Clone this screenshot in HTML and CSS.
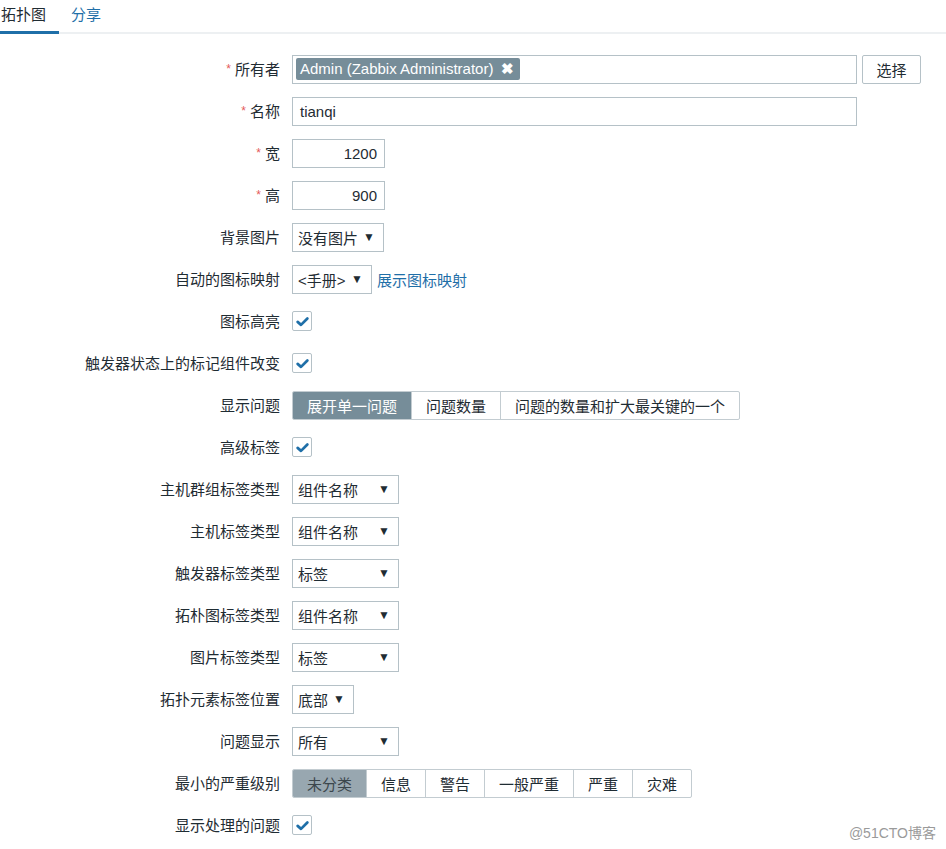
FILE: index.html
```html
<!DOCTYPE html>
<html lang="zh">
<head>
<meta charset="utf-8">
<link rel="stylesheet" href="styles.css">
</head>
<body>
<div class="tabs">
  <div class="tab active">拓扑图</div>
  <div class="tab link">分享</div>
</div>
<div class="form">
  <div class="row">
    <div class="label"><span class="req">*</span>所有者</div>
    <div class="field">
      <div class="multi"><span class="tag">Admin (Zabbix Administrator) <b class="x">✖</b></span></div>
      <button class="btn">选择</button>
    </div>
  </div>
  <div class="row">
    <div class="label"><span class="req">*</span>名称</div>
    <div class="field"><div class="input wide"><span class="latin">tianqi</span></div></div>
  </div>
  <div class="row">
    <div class="label"><span class="req">*</span>宽</div>
    <div class="field"><div class="input num"><span class="latin">1200</span></div></div>
  </div>
  <div class="row">
    <div class="label"><span class="req">*</span>高</div>
    <div class="field"><div class="input num"><span class="latin">900</span></div></div>
  </div>
  <div class="row">
    <div class="label">背景图片</div>
    <div class="field"><div class="select w92"><span>没有图片</span><i class="arr">▼</i></div></div>
  </div>
  <div class="row">
    <div class="label">自动的图标映射</div>
    <div class="field"><div class="select w80"><span>&lt;手册&gt;</span><i class="arr">▼</i></div><a class="lnk">展示图标映射</a></div>
  </div>
  <div class="row">
    <div class="label">图标高亮</div>
    <div class="field"><span class="cb"><svg viewBox="0 0 20 20" width="15" height="15"><path d="M3.5 10.5 L8 14.5 L16.5 6" fill="none" stroke="#1f6fa8" stroke-width="3.6" stroke-linecap="round" stroke-linejoin="round"/></svg></span></div>
  </div>
  <div class="row">
    <div class="label">触发器状态上的标记组件改变</div>
    <div class="field"><span class="cb"><svg viewBox="0 0 20 20" width="15" height="15"><path d="M3.5 10.5 L8 14.5 L16.5 6" fill="none" stroke="#1f6fa8" stroke-width="3.6" stroke-linecap="round" stroke-linejoin="round"/></svg></span></div>
  </div>
  <div class="row">
    <div class="label">显示问题</div>
    <div class="field">
      <div class="seg">
        <span class="opt on">展开单一问题</span><span class="opt">问题数量</span><span class="opt">问题的数量和扩大最关键的一个</span>
      </div>
    </div>
  </div>
  <div class="row">
    <div class="label">高级标签</div>
    <div class="field"><span class="cb"><svg viewBox="0 0 20 20" width="15" height="15"><path d="M3.5 10.5 L8 14.5 L16.5 6" fill="none" stroke="#1f6fa8" stroke-width="3.6" stroke-linecap="round" stroke-linejoin="round"/></svg></span></div>
  </div>
  <div class="row">
    <div class="label">主机群组标签类型</div>
    <div class="field"><div class="select w107"><span>组件名称</span><i class="arr">▼</i></div></div>
  </div>
  <div class="row">
    <div class="label">主机标签类型</div>
    <div class="field"><div class="select w107"><span>组件名称</span><i class="arr">▼</i></div></div>
  </div>
  <div class="row">
    <div class="label">触发器标签类型</div>
    <div class="field"><div class="select w107"><span>标签</span><i class="arr">▼</i></div></div>
  </div>
  <div class="row">
    <div class="label">拓朴图标签类型</div>
    <div class="field"><div class="select w107"><span>组件名称</span><i class="arr">▼</i></div></div>
  </div>
  <div class="row">
    <div class="label">图片标签类型</div>
    <div class="field"><div class="select w107"><span>标签</span><i class="arr">▼</i></div></div>
  </div>
  <div class="row">
    <div class="label">拓扑元素标签位置</div>
    <div class="field"><div class="select w62"><span>底部</span><i class="arr">▼</i></div></div>
  </div>
  <div class="row">
    <div class="label">问题显示</div>
    <div class="field"><div class="select w107"><span>所有</span><i class="arr">▼</i></div></div>
  </div>
  <div class="row">
    <div class="label">最小的严重级别</div>
    <div class="field">
      <div class="seg">
        <span class="opt sev-on">未分类</span><span class="opt">信息</span><span class="opt">警告</span><span class="opt">一般严重</span><span class="opt">严重</span><span class="opt">灾难</span>
      </div>
    </div>
  </div>
  <div class="row">
    <div class="label">显示处理的问题</div>
    <div class="field"><span class="cb"><svg viewBox="0 0 20 20" width="15" height="15"><path d="M3.5 10.5 L8 14.5 L16.5 6" fill="none" stroke="#1f6fa8" stroke-width="3.6" stroke-linecap="round" stroke-linejoin="round"/></svg></span></div>
  </div>
</div>
<div class="watermark">@51CTO博客</div>
</body>
</html>
```
FILE: styles.css
```css
html, body {
  margin: 0;
  padding: 0;
  background: #fff;
}
body {
  font-family: "Liberation Sans", "Noto Sans CJK SC", sans-serif;
  font-size: 15px;
  color: #1f2c33;
  width: 946px;
  height: 849px;
  position: relative;
  overflow: hidden;
}
.tabs {
  display: flex;
  height: 32px;
  border-bottom: 2px solid #edf0f2;
}
.tab {
  box-sizing: border-box;
  height: 34px;
  line-height: 30px;
  margin-bottom: -2px;
  padding: 0 12px;
}
.tab.active {
  padding: 0 13px 0 1px;
  border-bottom: 3px solid #1f6fa8;
  color: #1f2c33;
}
.tab.link {
  color: #1f6fa8;
}
.form {
  padding-top: 21px;
}
.row {
  display: flex;
  align-items: center;
  height: 28px;
  margin-bottom: 14px;
}
.label {
  width: 280px;
  box-sizing: border-box;
  text-align: right;
  margin-right: 12px;
  white-space: nowrap;
  position: relative;
  top: -1px;
}
.req {
  color: #e45959;
  font-size: 12px;
  position: relative;
  top: -2px;
  margin-right: 4px;
}
.field {
  display: flex;
  align-items: center;
}
.latin {
  font-size: 15px;
}
.multi {
  box-sizing: border-box;
  width: 565px;
  height: 29px;
  border: 1px solid #b5c1c7;
  display: flex;
  align-items: center;
  padding-left: 3px;
}
.tag {
  background: #768d99;
  color: #fff;
  font-size: 15px;
  height: 22px;
  line-height: 22px;
  padding: 0 6px 0 4px;
  border-radius: 2px;
  white-space: nowrap;
}
.tag .x {
  font-size: 15px;
  margin-left: 3px;
}
.btn {
  box-sizing: border-box;
  margin-left: 5px;
  width: 59px;
  height: 29px;
  border: 1px solid #b5c1c7;
  border-radius: 2px;
  background: #fff;
  font-family: inherit;
  font-size: 15px;
  color: #1f2c33;
  padding: 0;
}
.input {
  box-sizing: border-box;
  height: 29px;
  border: 1px solid #b5c1c7;
  display: flex;
  align-items: center;
  padding: 0 7px;
}
.input.wide {
  width: 565px;
}
.input.num {
  width: 93px;
  justify-content: flex-end;
}
.select {
  box-sizing: border-box;
  height: 29px;
  border: 1px solid #b5c1c7;
  display: flex;
  align-items: center;
  justify-content: space-between;
  padding: 0 8px 0 5px;
  white-space: nowrap;
}
.select .arr {
  font-style: normal;
  font-size: 12px;
  color: #1f2c33;
}
.w92 { width: 92px; }
.w80 { width: 80px; }
.w107 { width: 107px; }
.w62 { width: 62px; }
.lnk {
  color: #1f6fa8;
  margin-left: 5px;
}
.cb {
  box-sizing: border-box;
  width: 20px;
  height: 20px;
  border: 1px solid #b5c1c7;
  border-radius: 2px;
  display: flex;
  align-items: center;
  justify-content: center;
}
.seg {
  display: flex;
  height: 29px;
  box-sizing: border-box;
  border: 1px solid #c3ccd1;
  border-radius: 2px;
  overflow: hidden;
}
.opt {
  display: flex;
  align-items: center;
  padding: 0 14px;
  border-left: 1px solid #c3ccd1;
  white-space: nowrap;
}
.opt:first-child {
  border-left: none;
}
.opt.on {
  background: #768d99;
  color: #fff;
}
.opt.sev-on {
  background: #98a7b0;
  color: #3b464c;
}
.watermark {
  position: absolute;
  right: 10px;
  top: 822px;
  color: #9a9a9a;
  font-size: 14px;
}
```
